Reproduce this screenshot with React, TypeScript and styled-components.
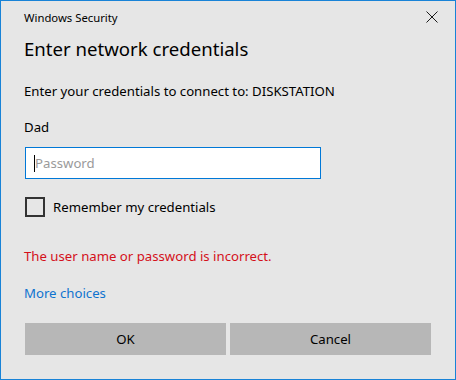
import React from 'react'
import styled, { createGlobalStyle } from 'styled-components'

const GlobalStyle = createGlobalStyle`
  html, body {
    margin: 0;
    padding: 0;
    background: #e6e6e6;
  }
  * {
    box-sizing: border-box;
  }
`

export default function App() {
  return (
    <Window>
      <GlobalStyle />
      <TitleBar>
        <TitleText>Windows Security</TitleText>
        <CloseButton aria-label="Close">
          <svg width="12" height="12" viewBox="0 0 12 12">
            <path d="M0.5 0.5 L11.5 11.5 M11.5 0.5 L0.5 11.5" stroke="#1a1a1a" strokeWidth="1" fill="none" />
          </svg>
        </CloseButton>
      </TitleBar>
      <Body>
        <Heading>Enter network credentials</Heading>
        <Line>Enter your credentials to connect to: DISKSTATION</Line>
        <UserName>Dad</UserName>
        <FieldWrap>
          <PasswordField type="password" placeholder="Password" />
          <Caret />
        </FieldWrap>
        <CheckRow>
          <CheckBox />
          <CheckLabel>Remember my credentials</CheckLabel>
        </CheckRow>
        <ErrorText>The user name or password is incorrect.</ErrorText>
        <MoreLink>More choices</MoreLink>
        <ButtonRow>
          <DialogButton>OK</DialogButton>
          <DialogButton>Cancel</DialogButton>
        </ButtonRow>
      </Body>
    </Window>
  )
}

const Window = styled.div`
  width: 456px;
  height: 380px;
  border: 1px solid #1883d7;
  background: #e6e6e6;
  font-family: 'Noto Sans', 'Open Sans', sans-serif;
  color: #000;
  display: flex;
  flex-direction: column;
`

const TitleBar = styled.div`
  height: 32px;
  display: flex;
  align-items: center;
  justify-content: space-between;
  padding: 0 17px 0 23px;
`

const TitleText = styled.span`
  font-size: 11.3px;
  color: #000;
`

const CloseButton = styled.div`
  width: 12px;
  height: 12px;
  display: flex;
`

const Body = styled.div`
  display: flex;
  flex-direction: column;
  padding: 0 23px;
`

const Heading = styled.h1`
  margin: 2px 0 0;
  font-size: 18.6px;
  font-weight: 400;
  line-height: 28px;
`

const Line = styled.div`
  margin-top: 18px;
  font-size: 13.2px;
  line-height: 20px;
`

const UserName = styled(Line)`
  margin-top: 16px;
`

const FieldWrap = styled.div`
  position: relative;
  margin: 10px 0 0 1px;
  width: 296px;
  height: 32px;
`

const PasswordField = styled.input`
  width: 100%;
  height: 100%;
  border: 1px solid #0078d7;
  background: #fff;
  padding: 0 9px;
  font-family: inherit;
  font-size: 13.2px;
  outline: none;
  &::placeholder {
    color: #9a9a9a;
  }
`

const Caret = styled.span`
  position: absolute;
  left: 9px;
  top: 8px;
  width: 1px;
  height: 17px;
  background: #000;
`

const CheckRow = styled.div`
  margin: 18px 0 0 1px;
  display: flex;
  align-items: center;
  gap: 8px;
`

const CheckBox = styled.span`
  width: 20px;
  height: 20px;
  border: 2px solid #333;
`

const CheckLabel = styled.span`
  font-size: 13.2px;
`

const ErrorText = styled(Line)`
  margin-top: 29px;
  color: #d4101a;
`

const MoreLink = styled(Line)`
  margin-top: 17px;
  color: #0f73cf;
`

const ButtonRow = styled.div`
  margin: 20px 0 0 1px;
  display: grid;
  grid-template-columns: 201px 201px;
  gap: 4px;
`

const DialogButton = styled.button`
  height: 32px;
  border: none;
  background: #b7b7b7;
  font-family: inherit;
  font-size: 13.2px;
  color: #000;
`
